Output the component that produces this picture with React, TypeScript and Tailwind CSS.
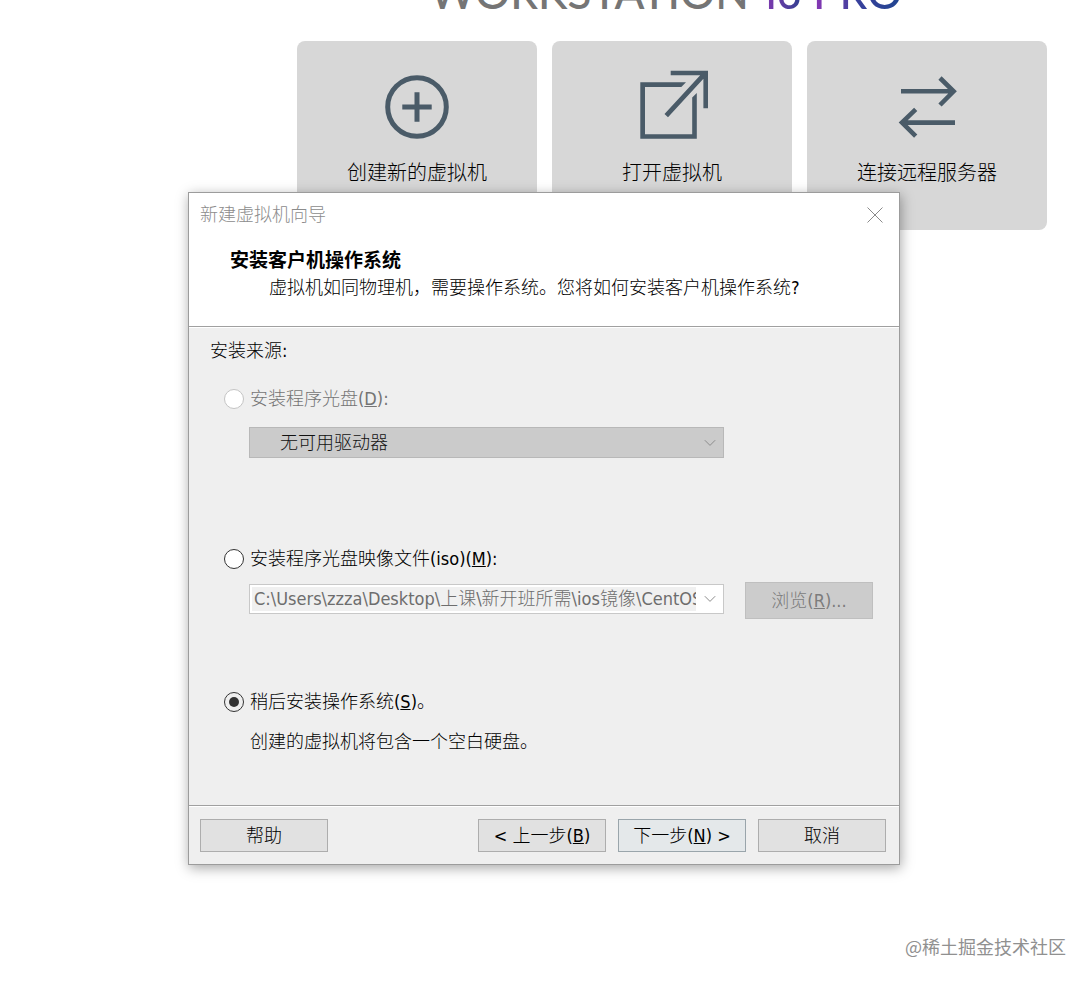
import type { ReactNode } from "react";

const cards = [
  { label: "创建新的虚拟机", icon: <CreateIcon /> },
  { label: "打开虚拟机", icon: <OpenIcon /> },
  { label: "连接远程服务器", icon: <ConnectIcon /> },
];

function CreateIcon() {
  return (
    <svg className="h-18 w-18" viewBox="0 0 72 72" fill="none" stroke="#4a5b68" strokeWidth="5">
      <circle cx="36" cy="38" r="29.3" />
      <path d="M21.3 38h29.4M36 23.3v29.4" />
    </svg>
  );
}

function OpenIcon() {
  return (
    <svg className="h-18 w-18" viewBox="0 0 72 72" fill="#4a5b68">
      <path d="M4.3 13.3H50l-4.7 4.7H9v47.2h47.2V28.6l4.6-4.7v45.9H4.3z" />
      <path d="M34.7 1.7H72v37.6h-4.6V9.8L32 48.2l-3.5-3.3L64.2 6.3H34.7z" />
    </svg>
  );
}

function ConnectIcon() {
  return (
    <svg className="h-18 w-18" viewBox="0 0 72 72" fill="none" stroke="#4a5b68" strokeWidth="4.6">
      <path d="M10 22.3h52M49 9l13.6 13.3L49 36" />
      <path d="M64 53.6H11M24.7 40.4 11 53.6l13.7 13.6" />
    </svg>
  );
}

function Chevron() {
  return (
    <svg className="h-3 w-3" viewBox="0 0 12 12" fill="none" stroke="#8c8c8c">
      <path d="M.8 3.2 6 8.4l5.2-5.2" />
    </svg>
  );
}

function Radio({
  id,
  disabled,
  checked,
  children,
}: {
  id: string;
  disabled?: boolean;
  checked?: boolean;
  children: ReactNode;
}) {
  return (
    <div className="flex h-6 items-center gap-[6px]">
      <input
        type="radio"
        name="source"
        id={id}
        disabled={disabled}
        defaultChecked={checked}
        className="h-5 w-5 appearance-none rounded-full border border-[#333] bg-white checked:bg-[#333] checked:bg-clip-content checked:p-1 disabled:border-[#c4c4c4]"
      />
      <label htmlFor={id} className={disabled ? "text-[#747474]" : ""}>
        {children}
      </label>
    </div>
  );
}

export default function App() {
  return (
    <div className="relative min-h-screen overflow-hidden bg-white font-['DejaVu_Sans_Condensed','Noto_Sans_CJK_SC',sans-serif] text-[18px] leading-6 font-light text-black">
      <main className="pr-[45px] pl-[297px]">
        <header className="flex h-[41px] items-end justify-center pr-3 pb-[26px]">
          <h1 className="font-['Lato',sans-serif] text-[44px] leading-none font-medium whitespace-nowrap text-[#757575]">
            WORKSTATION{" "}
            <span className="bg-linear-to-r from-[#8a35b5] to-[#2c3e90] bg-clip-text font-['Inter',sans-serif] text-[40px] text-transparent">
              16
            </span>{" "}
            <span className="bg-linear-to-r from-[#8a35b5] via-[#38409c] to-[#1f4590] bg-clip-text text-transparent">
              PRO
            </span>
          </h1>
        </header>
        <div className="grid grid-cols-3 gap-[15px]">
          {cards.map((card) => (
            <button
              key={card.label}
              className="flex h-[189px] flex-col items-center rounded-lg bg-[#d7d7d7] pt-7 font-['Noto_Sans_CJK_SC',sans-serif] text-xl leading-6"
            >
              {card.icon}
              <span className="mt-[19px]">{card.label}</span>
            </button>
          ))}
        </div>
      </main>

      <section
        role="dialog"
        aria-labelledby="wizard-title"
        className="absolute top-48 left-[188px] w-[712px] border border-[#9c9c9c] bg-[#efefef] shadow-[1px_3px_12px_rgba(0,0,0,0.35)]"
      >
        <div className="border-b border-[#a0a0a0] bg-white pb-[26px]">
          <div className="flex h-[43px] items-center justify-between pr-4 pl-[11px] text-[#8c8c8c]">
            <span id="wizard-title">新建虚拟机向导</span>
            <button aria-label="关闭">
              <svg className="h-4 w-4" viewBox="0 0 16 16" stroke="#8a8a8a">
                <path d="M.5.5l15 15M15.5.5l-15 15" />
              </svg>
            </button>
          </div>
          <h2 className="mt-3 pl-[41px] text-[19px] leading-6 font-bold">
            安装客户机操作系统
          </h2>
          <p className="mt-1 pl-20">
            虚拟机如同物理机，需要操作系统。您将如何安装客户机操作系统?
          </p>
        </div>

        <div className="border-t border-white pt-[11px] pr-[26px] pb-[51px] pl-[35px]">
          <p className="-ml-[14px]">安装来源:</p>
          <div className="mt-6">
            <Radio id="disc" disabled>
              安装程序光盘(<u>D</u>):
            </Radio>
          </div>
          <div className="relative mt-4 mr-[149px] ml-[25px]">
            <select
              disabled
              aria-label="驱动器"
              className="block h-[31px] w-full appearance-none border border-[#b8b8b8] bg-[#cbcbcb] pl-[30px] text-[#111] disabled:opacity-100"
            >
              <option>无可用驱动器</option>
            </select>
            <span className="pointer-events-none absolute inset-y-0 right-2 flex items-center">
              <Chevron />
            </span>
          </div>

          <div className="mt-[89px]">
            <Radio id="iso">
              安装程序光盘映像文件(iso)(<u>M</u>):
            </Radio>
          </div>
          <div className="mt-[11px] ml-[25px] flex items-start gap-[21px]">
            <div className="mt-0.5 flex h-[30px] flex-1 items-center border border-[#c8c8c8] bg-white pr-[7px] pl-[2px]">
              <input
                disabled
                aria-label="映像文件路径"
                defaultValue="C:\Users\zzza\Desktop\上课\新开班所需\ios镜像\CentOS-7"
                className="h-6 min-w-0 flex-1 bg-[#f0f0f0] pb-px pl-[2px] text-[#6d6d6d]"
              />
              <button disabled aria-label="展开" className="ml-2">
                <Chevron />
              </button>
            </div>
            <button
              disabled
              className="h-[37px] w-32 border border-[#bfbfbf] bg-[#cccccc] text-[#7c7c7c]"
            >
              浏览(<u>R</u>)...
            </button>
          </div>

          <div className="mt-[71px]">
            <Radio id="later" checked>
              稍后安装操作系统(<u>S</u>)。
            </Radio>
          </div>
          <p className="mt-4 pl-[26px]">创建的虚拟机将包含一个空白硬盘。</p>
        </div>

        <div className="border-t border-[#a0a0a0]">
          <div className="flex gap-3 border-t border-white py-3 pr-[13px] pl-[11px]">
            <button className="mr-auto h-[33px] w-32 border border-[#adadad] bg-[#e1e1e1]">
              帮助
            </button>
            <button className="h-[33px] w-32 border border-[#adadad] bg-[#e1e1e1]">
              &lt; 上一步(<u>B</u>)
            </button>
            <button className="h-[33px] w-32 border border-[#9aa5ab] bg-[#e4e8ea]">
              下一步(<u>N</u>) &gt;
            </button>
            <button className="h-[33px] w-32 border border-[#adadad] bg-[#e1e1e1]">
              取消
            </button>
          </div>
        </div>
      </section>

      <p className="absolute right-[26px] bottom-[26px] font-['Noto_Sans_CJK_SC',sans-serif] font-normal text-[#909090]">
        @稀土掘金技术社区
      </p>
    </div>
  );
}
